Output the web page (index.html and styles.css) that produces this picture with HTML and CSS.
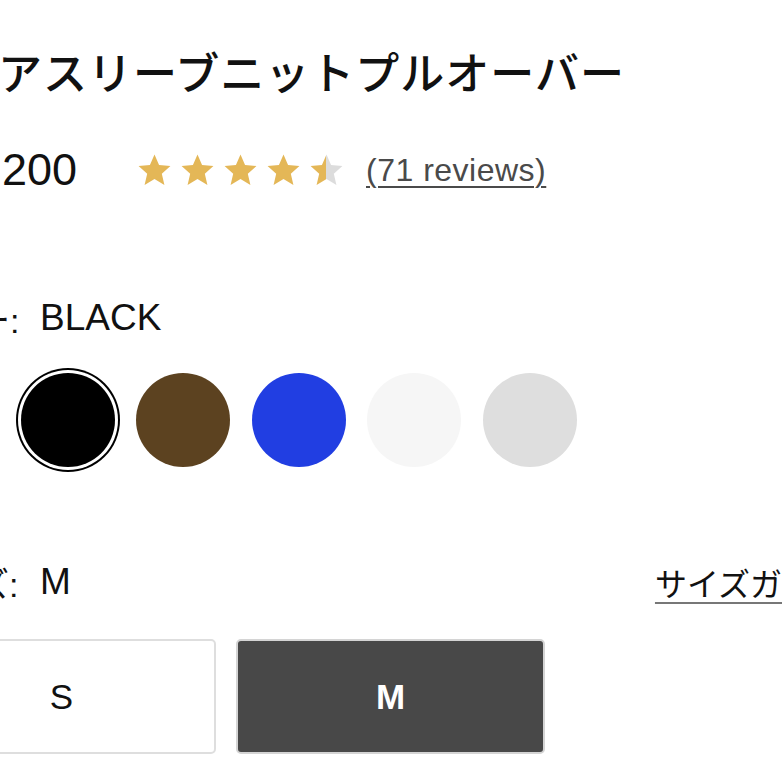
FILE: index.html
```html
<!DOCTYPE html>
<html lang="ja">
<head>
<meta charset="utf-8">
<link rel="stylesheet" href="styles.css">
</head>
<body>
<div class="page">
  <h1 class="title">フレアスリーブニットプルオーバー</h1>

  <div class="price-row">
    <span class="price">¥14,200</span>
    <div class="stars">
      <svg class="star" viewBox="0 0 24 24"><polygon points="12,2.2 14.8,8.6 21.8,9.3 16.5,14 18.1,20.9 12,17.3 5.9,20.9 7.5,14 2.2,9.3 9.2,8.6"/></svg>
      <svg class="star" viewBox="0 0 24 24"><polygon points="12,2.2 14.8,8.6 21.8,9.3 16.5,14 18.1,20.9 12,17.3 5.9,20.9 7.5,14 2.2,9.3 9.2,8.6"/></svg>
      <svg class="star" viewBox="0 0 24 24"><polygon points="12,2.2 14.8,8.6 21.8,9.3 16.5,14 18.1,20.9 12,17.3 5.9,20.9 7.5,14 2.2,9.3 9.2,8.6"/></svg>
      <svg class="star" viewBox="0 0 24 24"><polygon points="12,2.2 14.8,8.6 21.8,9.3 16.5,14 18.1,20.9 12,17.3 5.9,20.9 7.5,14 2.2,9.3 9.2,8.6"/></svg>
      <svg class="star" viewBox="0 0 24 24">
        <defs><linearGradient id="half" x1="0" x2="1" y1="0" y2="0"><stop offset="0.5" stop-color="#e4b757"/><stop offset="0.5" stop-color="#dcdcdc"/></linearGradient></defs>
        <polygon class="half" points="12,2.2 14.8,8.6 21.8,9.3 16.5,14 18.1,20.9 12,17.3 5.9,20.9 7.5,14 2.2,9.3 9.2,8.6"/>
      </svg>
    </div>
    <a class="reviews" href="#">(71 reviews)</a>
  </div>

  <div class="option-label"><span class="label-key">カラー:</span><span class="label-val">BLACK</span></div>

  <div class="swatches">
    <span class="swatch sw-ivory"></span>
    <span class="swatch sw-black selected"></span>
    <span class="swatch sw-brown"></span>
    <span class="swatch sw-blue"></span>
    <span class="swatch sw-white"></span>
    <span class="swatch sw-grey"></span>
  </div>

  <div class="size-head">
    <div class="option-label size-label"><span class="label-key">サイズ:</span><span class="label-val">M</span></div>
    <a class="guide" href="#">サイズガイド</a>
  </div>

  <div class="sizes">
    <button class="size-btn">S</button>
    <button class="size-btn active">M</button>
  </div>
</div>
</body>
</html>
```

FILE: styles.css
```css
html, body {
  margin: 0;
  padding: 0;
  background: #ffffff;
  overflow: hidden;
}

body {
  width: 782px;
  height: 782px;
  font-family: "Liberation Sans", "Noto Sans CJK JP", sans-serif;
  color: #111;
}

.page {
  margin-left: -92px;
  width: 940px;
}

.title {
  margin: 0;
  padding-top: 41px;
  height: 60px;
  line-height: 60px;
  font-size: 44px;
  font-weight: 500;
  font-family: "Noto Sans CJK JP", sans-serif;
  letter-spacing: 1px;
  white-space: nowrap;
  color: #111;
}

.price-row {
  margin-top: 39px;
  height: 60px;
  display: flex;
  align-items: center;
}

.price {
  font-size: 45px;
  color: #111;
  width: 169px;
  text-align: right;
  white-space: nowrap;
}

.stars {
  display: flex;
  gap: 4px;
  margin-left: 58px;
}

.star {
  width: 39px;
  height: 39px;
  fill: #e4b757;
}

.star .half {
  fill: url(#half);
}

.reviews {
  margin-left: 20px;
  font-size: 32px;
  letter-spacing: 0.5px;
  color: #4a4a4a;
  text-decoration: underline;
  text-decoration-thickness: 2px;
  text-underline-offset: 5px;
}

.option-label {
  margin-top: 93px;
  height: 50px;
  display: flex;
  align-items: center;
  font-size: 37px;
}

.label-key {
  width: 108px;
  text-align: right;
  font-size: 34px;
  white-space: nowrap;
}

.label-val {
  margin-left: 24px;
}

.swatches {
  margin-top: 25px;
  margin-left: -3px;
  height: 104px;
  display: flex;
  align-items: center;
  gap: 21.5px;
}

.swatch {
  flex: none;
  width: 94px;
  height: 94px;
  border-radius: 50%;
}

.sw-ivory { background: #fbfbfb; }
.sw-black { background: #000; }
.sw-brown { background: #5c4220; }
.sw-blue { background: #213ee2; }
.sw-white { background: #f6f6f6; }
.sw-grey { background: #dedede; }

.swatch.selected {
  box-shadow: 0 0 0 3px #fff, 0 0 0 5px #000;
}

.size-head {
  margin-top: 85px;
  height: 50px;
  display: flex;
  align-items: center;
  justify-content: space-between;
}

.size-head .option-label {
  margin-top: 0;
}

.guide {
  font-family: "Noto Sans CJK JP", sans-serif;
  font-size: 32px;
  margin-right: 2px;
  color: #111;
  text-decoration: underline;
  text-decoration-color: #777;
  text-decoration-thickness: 2px;
  text-underline-offset: 6px;
  white-space: nowrap;
}

.sizes {
  margin-top: 32px;
  margin-left: -1px;
  display: flex;
  gap: 20px;
}

.size-btn {
  flex: none;
  width: 309px;
  height: 115px;
  border: 2px solid #dedede;
  border-radius: 5px;
  background: #fff;
  font-family: "Liberation Sans", sans-serif;
  font-size: 35px;
  color: #111;
  padding: 0;
}

.size-btn.active {
  background: #484848;
  border-color: #d4d4d4;
  color: #fff;
  font-weight: bold;
}
```
